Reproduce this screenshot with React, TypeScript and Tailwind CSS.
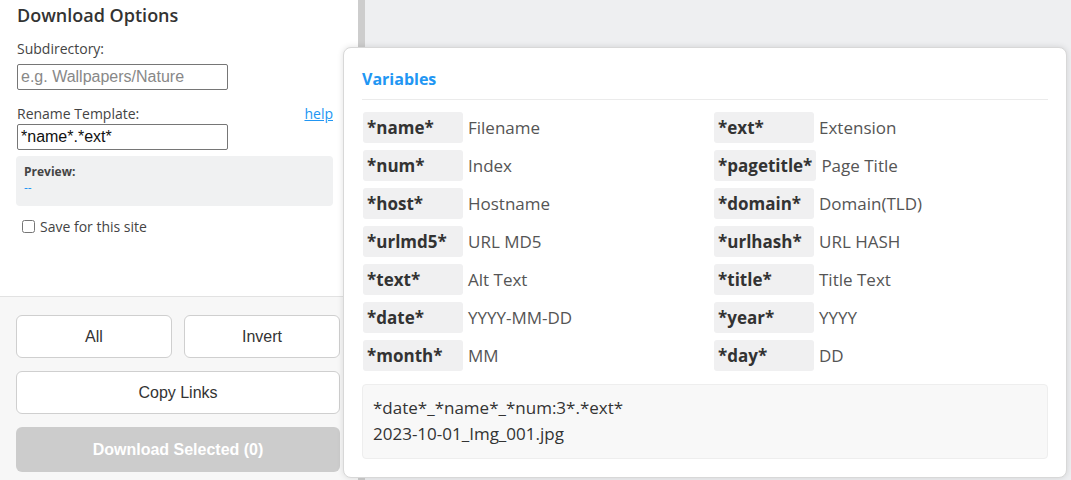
import React from 'react';

const vars: [string, string, string, string][] = [
  ['*name*', 'Filename', '*ext*', 'Extension'],
  ['*num*', 'Index', '*pagetitle*', 'Page Title'],
  ['*host*', 'Hostname', '*domain*', 'Domain(TLD)'],
  ['*urlmd5*', 'URL MD5', '*urlhash*', 'URL HASH'],
  ['*text*', 'Alt Text', '*title*', 'Title Text'],
  ['*date*', 'YYYY-MM-DD', '*year*', 'YYYY'],
  ['*month*', 'MM', '*day*', 'DD'],
];

function VarItem({ tag, label }: { tag: string; label: string }) {
  return (
    <div className="flex items-center h-[31px]">
      <span className="h-full min-w-[100px] px-[4px] flex items-center bg-[#f0f0f1] rounded-[3px] font-bold text-[17px] text-[#333] font-['Open_Sans',sans-serif]">
        {tag}
      </span>
      <span className="ml-[5px] text-[17px] text-[#555] font-['Open_Sans',sans-serif]">{label}</span>
    </div>
  );
}

export default function App() {
  return (
    <div className="relative w-[1071px] h-[480px] overflow-hidden bg-[#eeeff1] font-['Open_Sans',sans-serif]">
      <div className="flex h-full">
        {/* left panel */}
        <div className="w-[358px] h-full flex flex-col bg-white">
          <div className="h-[297px] border-b border-[#e2e2e2] px-[17px] pt-[2px]">
            <h2 className="text-[18px] font-semibold text-[#333]">Download Options</h2>
            <div className="mt-[10px] text-[14px] text-[#444] leading-[20px]">Subdirectory:</div>
            <input
              className="mt-[5px] w-[211px] h-[26px] border border-[#767676] rounded-[2px] px-[3px] text-[16px] font-['Liberation_Sans',sans-serif] placeholder:text-[#888] outline-none"
              placeholder="e.g. Wallpapers/Nature"
            />
            <div className="mt-[14px] flex justify-between items-center text-[14px] leading-[20px]">
              <span className="text-[#444]">Rename Template:</span>
              <a className="text-[#2196f3] underline mr-[8px]">help</a>
            </div>
            <input
              className="mt-0 w-[211px] h-[26px] border border-[#767676] rounded-[2px] px-[3px] text-[16px] text-[#111] font-['Liberation_Sans',sans-serif] outline-none"
              defaultValue="*name*.*ext*"
            />
            <div className="mt-[6px] w-[317px] h-[50px] bg-[#f0f1f2] rounded-[4px] px-[8px] pt-[8px] -ml-[1px]">
              <div className="text-[12px] font-bold text-[#444] leading-[16px]">Preview:</div>
              <div className="text-[12px] text-[#2196f3] leading-[16px]">--</div>
            </div>
            <label className="mt-[10px] ml-[5px] flex items-center gap-[5px] text-[14px] text-[#444]">
              <input type="checkbox" className="w-[13px] h-[13px]" />
              Save for this site
            </label>
          </div>
          <div className="flex-1 bg-[#f7f7f7] px-[16px] pt-[18px] flex flex-col gap-[13px] font-['Liberation_Sans',sans-serif]">
            <div className="flex gap-[12px]">
              <button className="w-[156px] h-[43px] bg-white border border-[#cfcfcf] rounded-[6px] text-[16px] text-[#333]">All</button>
              <button className="w-[156px] h-[43px] bg-white border border-[#cfcfcf] rounded-[6px] text-[16px] text-[#333]">Invert</button>
            </div>
            <button className="w-[324px] h-[43px] bg-white border border-[#cfcfcf] rounded-[6px] text-[16px] text-[#333]">Copy Links</button>
            <button className="w-[324px] h-[45px] bg-[#cccccc] rounded-[6px] text-[16px] font-bold text-white">Download Selected (0)</button>
          </div>
        </div>
        <div className="w-[7px] h-full bg-[#cdcdcd]" />
        <div className="flex-1 h-full bg-[#eeeff1]" />
      </div>

      {/* variables popup */}
      <div className="absolute left-[343px] top-[47px] w-[724px] h-[431px] bg-white border border-[#d8d8d8] rounded-[8px] shadow-[0_0_6px_rgba(0,0,0,0.12)] px-[18px] pt-[19px]">
        <div className="text-[16px] font-bold text-[#2196f3] leading-[24px] pb-[8px] border-b border-[#ebebeb]">Variables</div>
        <div className="mt-[12px] grid grid-cols-[351px_1fr] gap-y-[7px] ml-[1px]">
          {vars.map(([t1, l1, t2, l2]) => (
            <React.Fragment key={t1}>
              <VarItem tag={t1} label={l1} />
              <VarItem tag={t2} label={l2} />
            </React.Fragment>
          ))}
        </div>
        <div className="mt-[13px] h-[75px] bg-[#f8f8f8] border border-[#eeeeee] rounded-[4px] px-[10px] pt-[10px] text-[17px] text-[#333] leading-[26px]">
          <div>*date*_*name*_*num:3*.*ext*</div>
          <div>2023-10-01_Img_001.jpg</div>
        </div>
      </div>
    </div>
  );
}
